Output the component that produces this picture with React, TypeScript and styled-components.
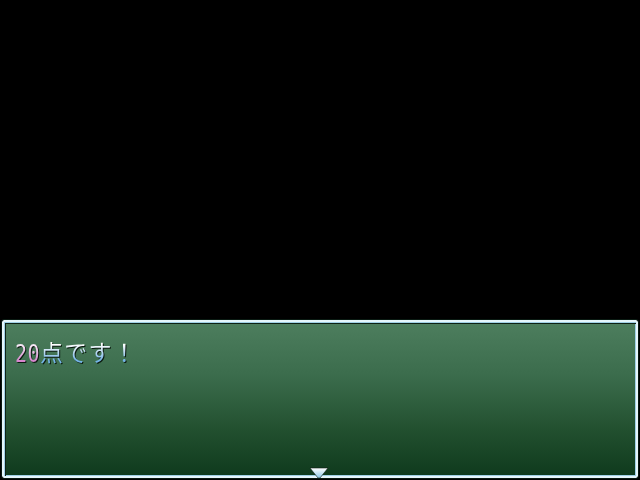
import React from 'react';
import styled, { createGlobalStyle } from 'styled-components';

const GlobalStyle = createGlobalStyle`
  html, body {
    margin: 0;
    padding: 0;
    background: #000;
  }
  #root {
    width: 640px;
    height: 480px;
    overflow: hidden;
  }
`;

const Screen = styled.div`
  width: 640px;
  height: 480px;
  background: #000;
  display: flex;
  flex-direction: column;
  justify-content: flex-end;
  padding: 0 2px 2px 2px;
  box-sizing: border-box;
`;

const MessageWindow = styled.div`
  position: relative;
  height: 158px;
  box-sizing: border-box;
  border: 2px solid #e6f6fc;
  border-radius: 2px;
  outline: 1px solid #0a1a12;
  box-shadow: inset 1px 1px 0 #9fd0e6, inset 2px 2px 0 #0e2216,
    inset -1px -1px 0 #9fd0e6;
  background: linear-gradient(
    to bottom,
    #4d7e5e 0%,
    #3b6c4c 35%,
    #22502f 70%,
    #0f3a1d 100%
  );
  padding: 16px 11px;
`;

const Line = styled.div`
  display: flex;
  align-items: baseline;
  font-family: 'Noto Sans CJK JP', 'DejaVu Sans', sans-serif;
  font-size: 23px;
  line-height: 26px;
  filter: drop-shadow(1px 1px 0 #0c1a10);
`;

const Chunk = styled.span<{ $tone: 'pink' | 'blue' }>`
  background: ${(p) =>
    p.$tone === 'pink'
      ? 'linear-gradient(to bottom, #f6e8f6 25%, #d070c4 85%)'
      : 'linear-gradient(to bottom, #ffffff 25%, #74b4e6 85%)'};
  -webkit-background-clip: text;
  background-clip: text;
  color: transparent;
  letter-spacing: 1.2px;
`;

// half-width digits are drawn tall and narrow
const Digits = styled(Chunk)`
  display: inline-block;
  font-family: 'DejaVu Sans Mono', monospace;
  font-size: 20px;
  letter-spacing: 0.5px;
  transform: translateY(1px) scaleY(1.25);
  transform-origin: 50% 78%;
`;

// "more text" cursor sitting on the bottom frame
const NextCursor = styled.svg`
  position: absolute;
  left: 50%;
  bottom: -3px;
  margin-left: -11px;
`;

export default function App() {
  return (
    <>
      <GlobalStyle />
      <Screen>
        <MessageWindow>
          <Line>
            <Digits $tone="pink">20</Digits>
            <Chunk $tone="blue">点です！</Chunk>
          </Line>
          <NextCursor width="20" height="12" viewBox="0 0 20 12">
            <defs>
              <linearGradient id="cur" x1="0" y1="0" x2="0" y2="1">
                <stop offset="0" stopColor="#ffffff" />
                <stop offset="1" stopColor="#8cc8e8" />
              </linearGradient>
            </defs>
            <polygon points="1,1 19,1 11,11 9,11" fill="url(#cur)" stroke="#0c1a10" strokeWidth="0.6" />
          </NextCursor>
        </MessageWindow>
      </Screen>
    </>
  );
}
